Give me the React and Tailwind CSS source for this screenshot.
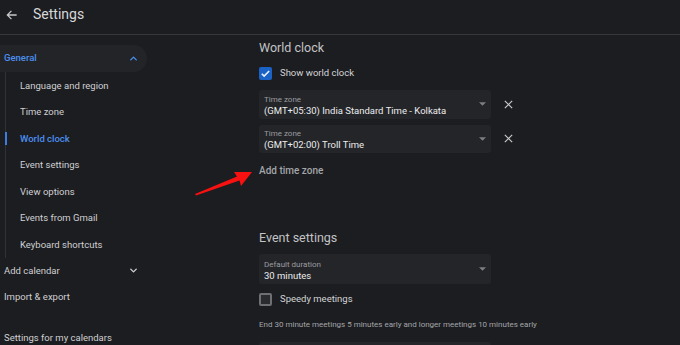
import React from 'react';

const font = { fontFamily: 'Roboto, "Noto Sans", sans-serif' };

const subItems = [
  'Language and region',
  'Time zone',
  'World clock',
  'Event settings',
  'View options',
  'Events from Gmail',
  'Keyboard shortcuts',
];

const Chevron = ({ up, className }) => (
  <svg viewBox="0 0 24 24" className={className} fill="none" stroke="currentColor" strokeWidth="3" strokeLinecap="round" strokeLinejoin="round">
    {up ? <path d="M6 15l6-6 6 6" /> : <path d="M6 9l6 6 6-6" />}
  </svg>
);

const Caret = () => (
  <svg viewBox="0 0 10 5" className="w-[7px] h-[4px] text-[#7c7e82]" fill="currentColor">
    <path d="M0 0h10L5 5z" />
  </svg>
);

const CloseIcon = () => (
  <svg viewBox="0 0 24 24" className="w-[11px] h-[11px] text-[#c8c9cb]" fill="none" stroke="currentColor" strokeWidth="2.6">
    <path d="M4 4l16 16M20 4L4 20" />
  </svg>
);

const Select = ({ label, value, className = '' }) => (
  <div className={`w-[232px] rounded-[3px] bg-[#242528] pl-[5px] pr-[5px] flex items-center ${className}`}>
    <div className="flex-1 flex flex-col pt-[3px]">
      <span className="text-[8px] leading-[10px] text-[#9a9ca0]">{label}</span>
      <span className="text-[9.5px] leading-[12px] text-[#ebecee]">{value}</span>
    </div>
    <Caret />
  </div>
);

const Checkbox = ({ checked }) =>
  checked ? (
    <div className="w-[13px] h-[13px] rounded-[2px] bg-[#1b62c6] flex items-center justify-center">
      <svg viewBox="0 0 24 24" className="w-[11px] h-[11px]" fill="none" stroke="#e8f0fe" strokeWidth="3.5">
        <path d="M4 12.5l5 5L20 6.5" />
      </svg>
    </div>
  ) : (
    <div className="w-[13px] h-[13px] rounded-[2px] border-2 border-[#6d6f73] bg-[#2a2b2e]" />
  );

export default function App() {
  return (
    <div className="relative w-[680px] h-[345px] overflow-hidden bg-[#1c1d20] text-[#d3d4d6]" style={font}>
      {/* header */}
      <div className="h-[35px] border-b border-[#36373a] flex items-center pb-[5px]">
        <svg viewBox="0 0 24 24" className="ml-[5px] w-[14px] h-[14px] text-[#c6c7c9]" fill="none" stroke="currentColor" strokeWidth="2.2">
          <path d="M20 12H5M11 5l-7 7 7 7" />
        </svg>
        <span className="ml-[14px] text-[14px] text-[#d6d7d9]">Settings</span>
      </div>

      <div className="flex">
        {/* sidebar */}
        <div className="w-[259px] shrink-0">
          <div className="mt-[10px] w-[147px] h-[27px] rounded-r-full bg-[#232427] flex items-center pl-[4px] pr-[8px]">
            <span className="flex-1 text-[9.5px] font-medium text-[#4a8ff0]">General</span>
            <Chevron up className="w-[11px] h-[11px] text-[#4a8ff0]" />
          </div>
          <div className="ml-[5px] border-l border-[#313235]">
            {subItems.map((item) => (
              <div key={item} className="relative h-[26.5px] flex items-center pl-[14px] pt-[1px]">
                {item === 'World clock' && (
                  <div className="absolute left-[-1px] top-[7px] w-[2px] h-[13px] bg-[#3b7de0]" />
                )}
                <span className={`text-[9.5px] ${item === 'World clock' ? 'text-[#4a8ff0] font-medium' : 'text-[#cfd0d2]'}`}>
                  {item}
                </span>
              </div>
            ))}
          </div>
          <div className="w-[147px] h-[26.5px] flex items-center pl-[4px] pr-[8px]">
            <span className="flex-1 text-[9.5px] text-[#cfd0d2]">Add calendar</span>
            <Chevron className="w-[11px] h-[11px] text-[#cfd0d2]" />
          </div>
          <div className="h-[26.5px] flex items-center pl-[4px]">
            <span className="text-[9.5px] text-[#cfd0d2]">Import &amp; export</span>
          </div>
          <div className="mt-[15px] h-[26px] flex items-center pl-[4px]">
            <span className="text-[9.5px] text-[#cfd0d2]">Settings for my calendars</span>
          </div>
        </div>

        {/* main */}
        <div className="flex-1">
          <div className="mt-[4px] h-[18px] flex items-center text-[12.5px] text-[#c2c3c6]">World clock</div>
          <div className="mt-[10px] h-[13px] flex items-center gap-[8px]">
            <Checkbox checked />
            <span className="text-[9.5px] text-[#d3d4d6]">Show world clock</span>
          </div>
          <div className="mt-[10px] flex flex-col gap-[6px]">
            {[
              '(GMT+05:30) India Standard Time - Kolkata',
              '(GMT+02:00) Troll Time',
            ].map((tz) => (
              <div key={tz} className="flex items-center">
                <Select label="Time zone" value={tz} className="h-[28.5px]" />
                <div className="ml-[12px]">
                  <CloseIcon />
                </div>
              </div>
            ))}
          </div>
          <div className="mt-[10px] h-[14px] flex items-center text-[10px] font-medium text-[#a3a5a9]">Add time zone</div>

          <div className="mt-[52px] h-[18px] flex items-center text-[12.5px] text-[#c2c3c6]">Event settings</div>
          <Select label="Default duration" value="30 minutes" className="mt-[7px] h-[30px]" />
          <div className="mt-[9px] h-[13px] flex items-center gap-[8px]">
            <Checkbox />
            <span className="text-[9.5px] text-[#d3d4d6]">Speedy meetings</span>
          </div>
          <div className="mt-[13px] h-[12px] flex items-center text-[8px] text-[#a3a5a9]">
            End 30 minute meetings 5 minutes early and longer meetings 10 minutes early
          </div>
          <div className="mt-[11px] w-[232px] h-[30px] rounded-[3px] bg-[#242528]" />
        </div>
      </div>

      {/* red annotation arrow */}
      <svg className="absolute left-0 top-0 w-[680px] h-[345px] pointer-events-none" viewBox="0 0 680 345">
        <polygon points="195,194 237,176.5 234,172 252,172 241,186 239.5,180.5 196,195.5" fill="#f81111" />
      </svg>
    </div>
  );
}
